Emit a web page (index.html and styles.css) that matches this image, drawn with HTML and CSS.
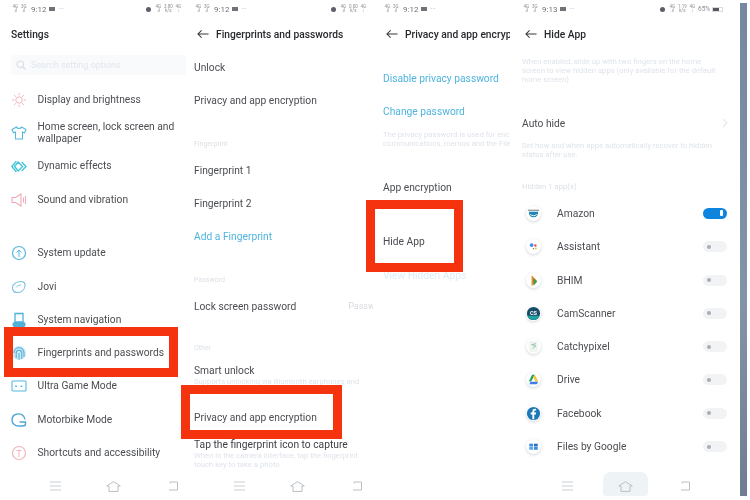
FILE: index.html
```html
<!DOCTYPE html>
<html lang="en">
<head>
    <meta charset="UTF-8">
    <meta name="viewport" content="width=device-width, initial-scale=1.0">
    <title>Hide App steps</title>
    <link rel="stylesheet" href="styles.css">
</head>
<body>
    <svg class="defs" width="0" height="0">
        <symbol id="menu" viewBox="0 0 11 10"><path d="M0 1h11M0 5h11M0 9h11" fill="none" stroke="#c9ced3" stroke-width="1"/></symbol>
        <symbol id="home" viewBox="0 0 15 11"><path d="M.7 5 7.500.7 14.300 5 12 5v5.400H3V5z" fill="none" stroke="#b9bfc5" stroke-width="1"/></symbol>
        <symbol id="back" viewBox="0 0 10 10"><path d="M2 2.500V1h7.500v8H1" fill="none" stroke="#b9bfc5" stroke-width="1"/></symbol>
        <symbol id="arrow" viewBox="0 0 13 10"><path d="M12.500 5H1M5 1 1 5l4 4" fill="none" stroke="#33363b" stroke-width="1.100"/></symbol>
    </svg>

    <main class="screens">
        <section class="panel panel-settings">
            <div class="status">
                <span class="sig">4G<br>.ıl</span><span class="sig">3G<br>.ıl</span><span class="time">9:12</span>
                <span class="cam"></span><span class="more">···</span>
                <span class="status-right"><span class="alarm"></span><span class="sig">4G<br>.ıl</span><span class="sig">3.80<br>k/s</span><span class="sig">4G<br>↕</span></span>
            </div>
            <div class="header"><h1>Settings</h1></div>
            <div class="search">
                <svg width="10" height="10" viewBox="0 0 10 10"><circle cx="4.300" cy="4.300" r="3.300" fill="none" stroke="#d9e0e8" stroke-width="1.200"/><path d="m7 7 2.500 2.500" stroke="#d9e0e8" stroke-width="1.200"/></svg>
                <span>Search setting options</span>
            </div>
            <div class="row">
                <svg class="icon" viewBox="0 0 16 16"><circle cx="8" cy="8" r="3.200" fill="none" stroke="#f4b6bd"/><path d="M8 1v2.500M8 12.500V15M1 8h2.500M12.500 8H15M3 3l1.800 1.800M11.200 11.200 13 13M3 13l1.800-1.800M11.200 4.800 13 3" stroke="#f4b6bd"/></svg>
                <span>Display and brightness</span>
            </div>
            <div class="row">
                <svg class="icon" viewBox="0 0 16 16"><path d="M5.500 2 1 4.500l1.500 3.200 2-.7V14h7V7l2 .7L15 4.500 10.500 2C10 4 6 4 5.500 2z" fill="none" stroke="#56b7de" stroke-width="1.100"/></svg>
                <span>Home screen, lock screen and wallpaper</span>
            </div>
            <div class="row">
                <svg class="icon icon-wide" viewBox="0 0 18 14"><path d="M6 1 1 7l5 6M8 2l5 5-5 5-4-5z" fill="none" stroke="#3cc4d8" stroke-width="1.500"/><path d="m12 2 5 5-5 5" fill="none" stroke="#3cc4d8" stroke-width="1.500"/></svg>
                <span>Dynamic effects</span>
            </div>
            <div class="row">
                <svg class="icon" viewBox="0 0 16 16"><path d="M1 5.500h3.500L10 2v12L4.500 10.500H1z" fill="none" stroke="#f0a9b3" stroke-width="1.100"/><path d="M12.500 5.500v5M14.500 4v8" stroke="#f0a9b3"/></svg>
                <span>Sound and vibration</span>
            </div>
            <div class="row row-gap">
                <svg class="icon" viewBox="0 0 16 16"><circle cx="8" cy="8" r="6.500" fill="none" stroke="#56b7de" stroke-width="1.200"/><path d="M8 12V5M5.500 7.500 8 5l2.500 2.500" fill="none" stroke="#56b7de"/></svg>
                <span>System update</span>
            </div>
            <div class="row">
                <svg class="icon" viewBox="0 0 16 16"><path d="M2 11c-2-4 2-8 7-8.500 3.500-.3 5.500 1.500 5 4.500-.6 4-4 6.500-8 6.500-2 0-3.300-.8-4-2.500z" fill="none" stroke="#77c2df" stroke-width="1.100"/><path d="M5 8.500C6 7 8 6 10 6" fill="none" stroke="#77c2df"/></svg>
                <span>Jovi</span>
            </div>
            <div class="row">
                <svg class="icon" viewBox="0 0 16 16"><path d="M4 1.500h8v8.500H4z" fill="none" stroke="#4fb0d8" stroke-width="1.300"/><rect x="1.500" y="10" width="13" height="5" rx="2" fill="#4fb0d8"/></svg>
                <span>System navigation</span>
            </div>
            <div class="row">
                <svg class="icon" viewBox="0 0 16 16"><circle cx="8" cy="8" r="7" fill="#cfe9f5"/><g fill="none" stroke="#4fb0d8" stroke-width="1.100"><path d="M3 8c0-7 10-7 10 0v4"/><path d="M5.200 13V8c0-3.600 5.600-3.600 5.600 0v6"/><path d="M8 8v6.500"/></g></svg>
                <span>Fingerprints and passwords</span>
            </div>
            <div class="row">
                <svg class="icon" viewBox="0 0 16 16"><rect x="1" y="3" width="14" height="10" rx="1" fill="none" stroke="#56b7de" stroke-width="1.100"/><path d="M5 7.500v1.500M10.500 7.500v1.500" stroke="#56b7de" stroke-width="1.800"/></svg>
                <span>Ultra Game Mode</span>
            </div>
            <div class="row">
                <svg class="icon" viewBox="0 0 16 16"><path d="M14 7.500C13.500 3 9.500 1.500 6.500 2 3 2.500 1 5 1 8c0 3.500 3 6 6.500 6H12c1.500 0 2.500-1 2.500-2.500V10H8.500" fill="none" stroke="#4fa8d4" stroke-width="1.400"/></svg>
                <span>Motorbike Mode</span>
            </div>
            <div class="row">
                <svg class="icon" viewBox="0 0 16 16"><circle cx="8" cy="8" r="6.500" fill="none" stroke="#f3b4bc" stroke-width="1.200"/><path d="M5.500 5.500h5M8 5.500V12" stroke="#f3b4bc"/></svg>
                <span>Shortcuts and accessibility</span>
            </div>
            <nav class="nav">
                <svg class="nav-menu"><use href="#menu"/></svg><svg class="nav-home"><use href="#home"/></svg><svg class="nav-back"><use href="#back"/></svg>
            </nav>
        </section>

        <section class="panel panel-fingerprints">
            <div class="status">
                <span class="sig">4G<br>.ıl</span><span class="sig">3G<br>.ıl</span><span class="time">9:12</span>
                <span class="cam"></span><span class="more">···</span>
                <span class="status-right"><span class="alarm"></span><span class="sig">4G<br>.ıl</span><span class="sig">0.00<br>k/s</span><span class="sig">4G<br>↕</span></span>
            </div>
            <div class="header">
                <svg class="arrow"><use href="#arrow"/></svg>
                <h1>Fingerprints and passwords</h1>
            </div>
            <div class="row">Unlock</div>
            <div class="row">Privacy and app encryption</div>
            <div class="label">Fingerprint</div>
            <div class="row">Fingerprint 1</div>
            <div class="row">Fingerprint 2</div>
            <div class="row link">Add a Fingerprint</div>
            <div class="label">Password</div>
            <div class="row row-split">Lock screen password<span class="value">Password</span></div>
            <div class="label label-other">Other</div>
            <div class="item">Smart unlock</div>
            <p class="note">Supports unlocking via Bluetooth earphones and</p>
            <div class="row row-privacy">Privacy and app encryption</div>
            <div class="item item-tight">Tap the fingerprint icon to capture</div>
            <p class="note">When in the camera interface, tap the fingerprint touch key to take a photo</p>
            <nav class="nav nav-second">
                <svg class="nav-menu"><use href="#menu"/></svg><svg class="nav-home"><use href="#home"/></svg><svg class="nav-back"><use href="#back"/></svg>
            </nav>
        </section>

        <section class="panel panel-privacy">
            <div class="status">
                <span class="sig">4G<br>.ıl</span><span class="sig">3G<br>.ıl</span><span class="time">9:12</span>
                <span class="cam"></span><span class="more">···</span>
            </div>
            <div class="header">
                <svg class="arrow"><use href="#arrow"/></svg>
                <h1>Privacy and app encryption</h1>
            </div>
            <div class="row link row-first">Disable privacy password</div>
            <div class="row link">Change password</div>
            <p class="note note-clip">The privacy password is used for encrypting<br>communications, memos and the File Manager</p>
            <div class="row row-app">App encryption</div>
            <div class="row row-hide">Hide App</div>
            <div class="row link row-faded">View Hidden Apps</div>
        </section>

        <section class="panel panel-hide">
            <div class="status">
                <span class="sig">4G<br>.ıl</span><span class="sig">3G<br>.ıl</span><span class="time">9:13</span>
                <span class="cam"></span><span class="more">···</span>
                <span class="status-right"><span class="alarm"></span><span class="sig">4G<br>.ıl</span><span class="sig">1.19<br>k/s</span><span class="sig">4G<br>↕</span><span class="percent">65%</span><span class="battery"><i></i></span></span>
            </div>
            <div class="header">
                <svg class="arrow"><use href="#arrow"/></svg>
                <h1>Hide App</h1>
            </div>
            <p class="note note-intro">When enabled, slide up with two fingers on the home screen to view hidden apps (only available for the default home screen)</p>
            <div class="row row-auto">Auto hide
                <svg class="chevron" width="6" height="10" viewBox="0 0 6 10"><path d="m1 1 4 4-4 4" fill="none" stroke="#e6e9ee" stroke-width="1.200"/></svg>
            </div>
            <p class="note note-auto">Set how and when apps automatically recover to hidden status after use.</p>
            <div class="label label-apps">Hidden 1 app(s)</div>

            <div class="app">
                <span class="app-icon"><svg viewBox="0 0 16 16"><path d="M2 4h12v1H2z" fill="#5f6f78"/><path d="M3 6h10c0 4-2 6-5 6S3 10 3 6z" fill="#1f86b5"/><path d="M4.500 9c2 1.800 5 1.800 7 0" fill="none" stroke="#fff"/></svg></span>
                <span class="app-name">Amazon</span>
                <span class="toggle toggle-on"></span>
            </div>
            <div class="app">
                <span class="app-icon"><svg viewBox="0 0 16 16"><circle cx="6" cy="6.500" r="2" fill="#3f8df0"/><circle cx="10" cy="7" r="1.300" fill="#e5534b"/><circle cx="10.500" cy="10" r="1" fill="#f5bd2f"/><circle cx="8" cy="10.500" r=".8" fill="#36a852"/></svg></span>
                <span class="app-name">Assistant</span>
                <span class="toggle"></span>
            </div>
            <div class="app">
                <span class="app-icon"><svg viewBox="0 0 16 16"><path d="M6 2.500 11.500 8 6 14z" fill="#e8862a"/><path d="M8 5.500 12 9l-4 4.500z" fill="#3f9a4a"/></svg></span>
                <span class="app-name">BHIM</span>
                <span class="toggle"></span>
            </div>
            <div class="app">
                <span class="app-icon"><svg viewBox="0 0 16 16"><circle cx="8" cy="8" r="7" fill="#174d66"/><path d="M1.500 10.500h13A7 7 0 0 1 1.500 10.500z" fill="#1fa3a0"/><text x="8" y="9.500" class="app-glyph">CS</text></svg></span>
                <span class="app-name">CamScanner</span>
                <span class="toggle"></span>
            </div>
            <div class="app">
                <span class="app-icon"><svg viewBox="0 0 16 16"><rect x="3" y="2" width="10" height="12" rx="3" fill="#f1f5f2"/><path d="M10.500 5 6 6l4.500 1.500L7 10" fill="none" stroke="#8fc2ac"/></svg></span>
                <span class="app-name">Catchypixel</span>
                <span class="toggle"></span>
            </div>
            <div class="app">
                <span class="app-icon"><svg viewBox="0 0 16 16"><path d="M6.500 3h3l-4 7H3z" fill="#1fa463"/><path d="M9.500 3 13 10h-3L7.500 5z" fill="#f5c33b"/><path d="M5 10.500h8l-1.500 2.500H3.500z" fill="#3b7ded"/></svg></span>
                <span class="app-name">Drive</span>
                <span class="toggle"></span>
            </div>
            <div class="app">
                <span class="app-icon"><svg viewBox="0 0 16 16"><circle cx="8" cy="8" r="7" fill="#1b79b8"/><path d="M8.800 14V9h1.700l.3-2H8.800V5.800c0-.6.300-1 1-1h1V3.100c-2.300-.4-4 .4-4 2.500V7H5v2h1.800v5z" fill="#fff"/></svg></span>
                <span class="app-name">Facebook</span>
                <span class="toggle"></span>
            </div>
            <div class="app">
                <span class="app-icon"><svg viewBox="0 0 16 16"><rect x="3.500" y="5" width="4" height="3" fill="#3f8de0"/><rect x="8.500" y="5" width="4" height="3" fill="#2f6fc0"/><rect x="3.500" y="8.500" width="4" height="3" fill="#5aa7e8"/><rect x="8.500" y="8.500" width="4" height="3" fill="#3f8de0"/></svg></span>
                <span class="app-name">Files by Google</span>
                <span class="toggle"></span>
            </div>
            <nav class="nav nav-last">
                <svg class="nav-menu"><use href="#menu"/></svg><span class="home-pill"><svg class="nav-home"><use href="#home"/></svg></span><svg class="nav-back"><use href="#back"/></svg>
            </nav>
        </section>

        <div class="strip"></div>

        <div class="mark mark-one"></div>
        <div class="mark mark-two"></div>
        <div class="mark mark-three"></div>
    </main>
</body>
</html>
```

FILE: styles.css
```css
* {
    box-sizing: border-box;
}

html, body {
    margin: 0;
    padding: 0;
    background-color: #fff;
    overflow: hidden;
}

body {
    font-family: Roboto, "Liberation Sans", sans-serif;
    color: #4b4d52;
    font-size: 10.25px;
}

.defs {
    position: absolute;
}

.screens {
    position: relative;
    display: flex;
    width: 750px;
    height: 500px;
}

.panel {
    display: flex;
    flex-direction: column;
    height: 500px;
    overflow: hidden;
    flex: none;
    filter: blur(0.4px);
}

.panel-settings {
    width: 187px;
    padding-left: 11px;
}

.panel-fingerprints {
    width: 186px;
    padding-left: 7px;
}

.panel-privacy {
    width: 144px;
    padding-left: 10px;
    padding-right: 7px;
}

.panel-hide {
    width: 223px;
    padding-left: 5px;
}

.strip {
    width: 7px;
    height: 493px;
    margin-top: 3px;
    background: linear-gradient(#76879f, #8393a8 60%, #6f7d92);
}

/* status bar */
.status {
    display: flex;
    align-items: center;
    height: 17.700px;
    flex: none;
    padding-top: 1px;
    color: #8b8f95;
    white-space: nowrap;
}

.sig {
    width: 8.500px;
    font-size: 4.500px;
    line-height: 4px;
    text-align: center;
    flex: none;
}

.time {
    font-size: 8px;
    margin-left: 3px;
    margin-right: 3px;
    color: #6f7378;
}

.cam {
    width: 6px;
    height: 4px;
    background-color: #6f7378;
    margin-right: 3px;
}

.more {
    font-size: 7px;
    color: #b5b8bd;
}

.status-right {
    display: flex;
    align-items: center;
    margin-left: auto;
    width: 41px;
    flex: none;
}

.status-right .sig {
    margin-right: 1.500px;
}

.panel-fingerprints .status-right {
    margin-right: 1px;
}

.panel-hide .status-right {
    width: 67px;
    margin-right: 13px;
}

.alarm {
    width: 5px;
    height: 5px;
    border-radius: 50%;
    background-color: #5b6068;
    margin-right: 3px;
    flex: none;
}

.percent {
    font-size: 6.500px;
    margin-right: 2px;
}

.battery {
    display: block;
    width: 11px;
    height: 5px;
    border: 1px solid #d9dbde;
    flex: none;
}

.battery i {
    display: block;
    width: 6px;
    height: 3px;
    background-color: #55595f;
}

/* title row */
.header {
    display: flex;
    align-items: center;
    height: 33px;
    flex: none;
    overflow: hidden;
}

.header h1 {
    margin: 0;
    font-size: 10.250px;
    font-weight: 500;
    color: #26282c;
    white-space: nowrap;
}

.arrow {
    width: 12px;
    height: 10px;
    margin-left: 3px;
    margin-right: 7px;
    flex: none;
}

.search {
    display: flex;
    align-items: center;
    gap: 5px;
    width: 175px;
    height: 20px;
    margin-top: 4px;
    margin-bottom: 8.300px;
    padding-left: 5px;
    background-color: #f8fafc;
    border-radius: 3px;
    font-size: 9px;
    color: #e2e7ee;
}

.row {
    display: flex;
    align-items: center;
    height: 33.300px;
    flex: none;
    white-space: nowrap;
}

.panel-settings .row span {
    white-space: normal;
    line-height: 12px;
    width: 140px;
}

.icon {
    width: 16px;
    height: 16px;
    margin-right: 10.500px;
    flex: none;
}

.icon-wide {
    height: 13px;
}

.row-gap {
    margin-top: 20.400px;
}

.link {
    color: #4fb4de;
}

.label {
    display: flex;
    align-items: flex-end;
    height: 36.300px;
    padding-bottom: 6px;
    flex: none;
    font-size: 7px;
    color: #dde1e6;
}

.label-other {
    height: 35px;
}

.value {
    margin-left: 52px;
    font-size: 9px;
    color: #d5d8dc;
}

.item {
    height: 13px;
    line-height: 13px;
    margin-top: 5.500px;
    flex: none;
    white-space: nowrap;
}

.item-tight {
    margin-top: 4px;
    color: #3d3f44;
}

.note {
    margin: 0;
    font-size: 7.700px;
    line-height: 9px;
    color: #dfe4ea;
    flex: none;
}

.panel-fingerprints .note {
    width: 170px;
}

.row-privacy {
    margin-top: 15px;
}

.row-first {
    margin-top: 11px;
}

.note-clip {
    margin-top: 1.500px;
    white-space: nowrap;
    overflow: hidden;
}

.row-app {
    margin-top: 23px;
}

.row-hide {
    margin-top: 21px;
}

.row-faded {
    color: #dcedf6;
}

.note-intro {
    margin-top: 6.500px;
    width: 198px;
}

.row-auto {
    margin-top: 22.300px;
    width: 207px;
    justify-content: space-between;
}

.chevron {
    margin-right: 1px;
}

.note-auto {
    margin-top: 1.500px;
    width: 198px;
}

.label-apps {
    height: 32px;
    padding-bottom: 0;
    margin-bottom: 5.500px;
    font-size: 7.700px;
}

/* hidden apps list */
.app {
    display: flex;
    align-items: center;
    height: 33.300px;
    flex: none;
    width: 205px;
}

.app-icon {
    display: block;
    width: 15px;
    height: 15px;
    margin-left: 4px;
    margin-right: 16px;
    border-radius: 50%;
    background-color: #fff;
    box-shadow: 0 1px 3px rgba(70, 90, 110, 0.25);
    flex: none;
}

.app-icon svg {
    display: block;
    width: 15px;
    height: 15px;
}

.app-glyph {
    font-size: 6px;
    font-weight: 700;
    text-anchor: middle;
    fill: #fff;
}

.app-name {
    flex: 1;
}

.toggle {
    position: relative;
    width: 24px;
    height: 11px;
    border-radius: 6px;
    background-color: #f1f3f5;
}

.toggle::after {
    content: "";
    position: absolute;
    left: 4px;
    top: 3.500px;
    width: 4px;
    height: 4px;
    border-radius: 50%;
    background-color: #a9adb3;
}

.toggle-on {
    background-color: #0d84de;
}

.toggle-on::after {
    left: 17px;
    top: 2.500px;
    width: 3px;
    height: 6px;
    border-radius: 1px;
    background-color: #fff;
}

/* bottom nav */
.nav {
    display: flex;
    align-items: center;
    height: 28px;
    margin-top: auto;
    flex: none;
}

.panel-settings .nav {
    padding-left: 39px;
}

.nav-second {
    padding-left: 40px;
}

.nav-last {
    padding-left: 40px;
}

.nav-menu {
    width: 11px;
    height: 10px;
    margin-right: 45px;
}

.nav-home {
    width: 15px;
    height: 11px;
}

.nav-back {
    width: 10px;
    height: 10px;
    margin-left: 47px;
}

.home-pill {
    display: flex;
    align-items: center;
    align-self: flex-start;
    height: 24px;
    margin: 0 -15px;
    padding: 4px 15px 0;
    border-radius: 8px 8px 3px 3px;
    background-color: #eef3f6;
}

/* red marks over the screens */
.mark {
    position: absolute;
    border: 9px solid #f5330f;
}

.mark-one {
    left: 4px;
    top: 327px;
    width: 174px;
    height: 50px;
}

.mark-two {
    left: 181px;
    top: 385px;
    width: 161px;
    height: 54px;
}

.mark-three {
    left: 366px;
    top: 200px;
    width: 97px;
    height: 72px;
}
```
